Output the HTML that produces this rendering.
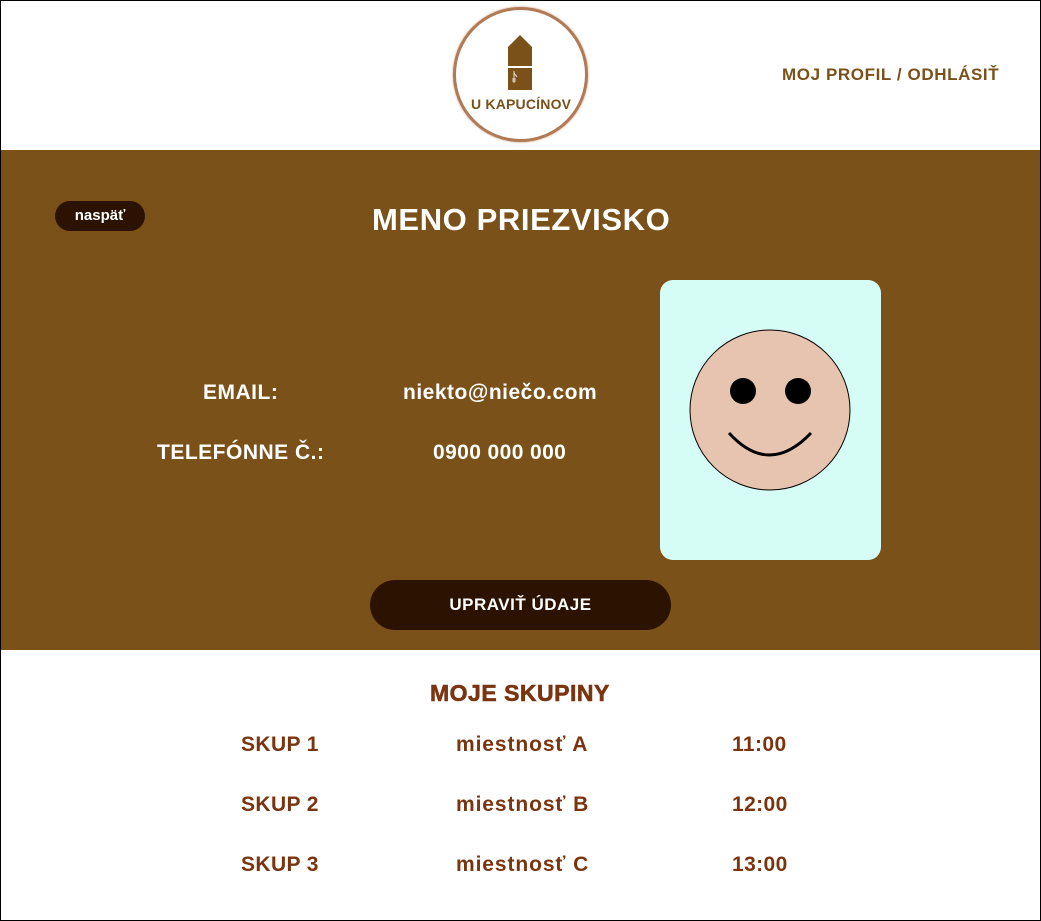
<!DOCTYPE html>
<html><head><meta charset="utf-8"><style>
*{margin:0;padding:0;box-sizing:border-box}
body{width:1041px;height:921px;background:#fff;font-family:"Liberation Sans",sans-serif;font-weight:bold;position:relative;overflow:hidden}
.frame{position:absolute;left:0;top:0;width:1041px;height:921px;border:1px solid #000}
.a{position:absolute;white-space:nowrap}
.band{position:absolute;left:1px;top:150px;width:1039px;height:500px;background:#7b511a}
.w{color:#fff}
.br{color:#7a3510;font-size:21px;letter-spacing:0.4px}
</style></head><body>
<div class="frame"></div>
<div class="a" style="left:453px;top:7px;width:135px;height:135px;border-radius:50%;border:3px solid #b07a55;box-shadow:0 0 2px #c79070;background:#fff"></div>
<svg class="a" style="left:505px;top:33px" width="30" height="60" viewBox="0 0 30 60">
<path d="M3 14 L15 2 L27 14 L27 33 L3 33 Z" fill="#7b511a"/>
<rect x="3" y="35" width="24" height="22" fill="#7b511a"/>
<path d="M9 38 L9 50 M7 46 L11 46 M7 48 L11 48 M9 40 L12 44" stroke="#fff" stroke-width="0.8" fill="none"/>
</svg>
<div class="a" style="left:471px;top:96px;font-size:14px;letter-spacing:0.2px;color:#7b511a">U KAPUCÍNOV</div>
<div class="a" style="left:782px;top:65px;font-size:17px;letter-spacing:0.6px;color:#7b511a">MOJ PROFIL / ODHLÁSIŤ</div>
<div class="band"></div>
<div class="a" style="left:55px;top:201px;width:90px;height:30px;border-radius:15px;background:#2c1200;color:#fff;font-size:15px;text-align:center;line-height:29px">naspäť</div>
<div class="a w" style="left:372px;top:202px;font-size:31px;letter-spacing:0.6px">MENO PRIEZVISKO</div>
<div class="a w" style="left:203px;top:381px;font-size:21px;letter-spacing:0.5px">EMAIL:</div>
<div class="a w" style="left:403px;top:381px;font-size:21px;letter-spacing:0.5px">niekto@niečo.com</div>
<div class="a w" style="left:157px;top:441px;font-size:21px;letter-spacing:0.5px">TELEFÓNNE Č.:</div>
<div class="a w" style="left:433px;top:441px;font-size:21px;letter-spacing:0.4px">0900 000 000</div>
<div class="a" style="left:660px;top:280px;width:221px;height:280px;border-radius:13px;background:#d5fcf5"></div>
<svg class="a" style="left:689px;top:329px" width="164" height="164" viewBox="0 0 164 164">
<circle cx="81" cy="81" r="80" fill="#e6c4b0" stroke="#000" stroke-width="1"/>
<circle cx="54" cy="62" r="13" fill="#000"/>
<circle cx="109" cy="62" r="13" fill="#000"/>
<path d="M40 104 Q80 148 122 104" stroke="#000" stroke-width="3" fill="none"/>
</svg>
<div class="a" style="left:370px;top:580px;width:301px;height:50px;border-radius:25px;background:#2c1200;color:#fff;font-size:17px;letter-spacing:0.5px;text-align:center;line-height:50px">UPRAVIŤ ÚDAJE</div>
<div class="a br" style="left:430px;top:680px;font-size:23px;letter-spacing:0.5px;-webkit-text-stroke:0.6px #7a3510">MOJE SKUPINY</div>
<div class="a br" style="left:241px;top:733px">SKUP 1</div>
<div class="a br" style="left:456px;top:733px;letter-spacing:0.9px">miestnosť A</div>
<div class="a br" style="left:732px;top:733px">11:00</div>
<div class="a br" style="left:241px;top:793px">SKUP 2</div>
<div class="a br" style="left:456px;top:793px;letter-spacing:0.9px">miestnosť B</div>
<div class="a br" style="left:732px;top:793px">12:00</div>
<div class="a br" style="left:241px;top:853px">SKUP 3</div>
<div class="a br" style="left:456px;top:853px;letter-spacing:0.9px">miestnosť C</div>
<div class="a br" style="left:732px;top:853px">13:00</div>
</body></html>
